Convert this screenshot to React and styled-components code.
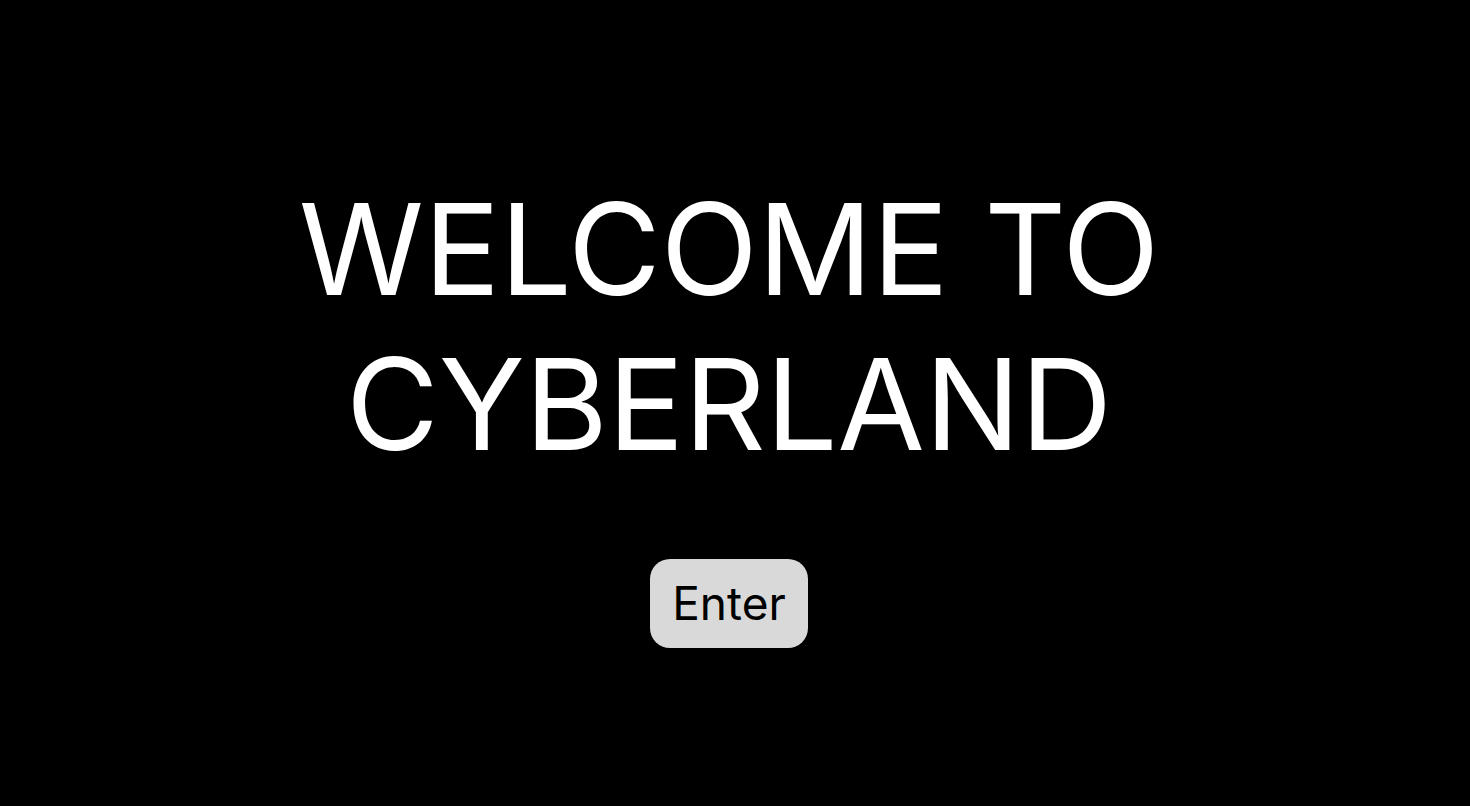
import React from "react";
import styled, { createGlobalStyle } from "styled-components";

const GlobalStyle = createGlobalStyle`
  body {
    margin: 0;
    background: #000;
    font-family: Inter, "Noto Sans", sans-serif;
  }
`;

const App = () => {
  return (
    <>
      <GlobalStyle />
      <Wrapper>
        <Title>
          WELCOME TO
          <br />
          CYBERLAND
        </Title>
        <EnterButton>Enter</EnterButton>
      </Wrapper>
    </>
  );
};

const Wrapper = styled.div`
  box-sizing: border-box;
  display: flex;
  flex-direction: column;
  align-items: center;
  justify-content: center;
  height: 100vh;
  padding: 14px 12px 0 0;
  gap: 77px;
  color: #fff;
`;

const Title = styled.h1`
  margin: 0;
  font-size: 127px;
  font-weight: 400;
  line-height: 155px;
  letter-spacing: -0.1px;
  text-align: center;
`;

const EnterButton = styled.button`
  font-family: Inter, "Noto Sans", sans-serif;
  font-size: 46px;
  line-height: 56px;
  color: #000;
  background: #d9d9d9;
  border: none;
  border-radius: 20px;
  padding: 16px 22px 17px;
  cursor: pointer;
`;

export default App;
